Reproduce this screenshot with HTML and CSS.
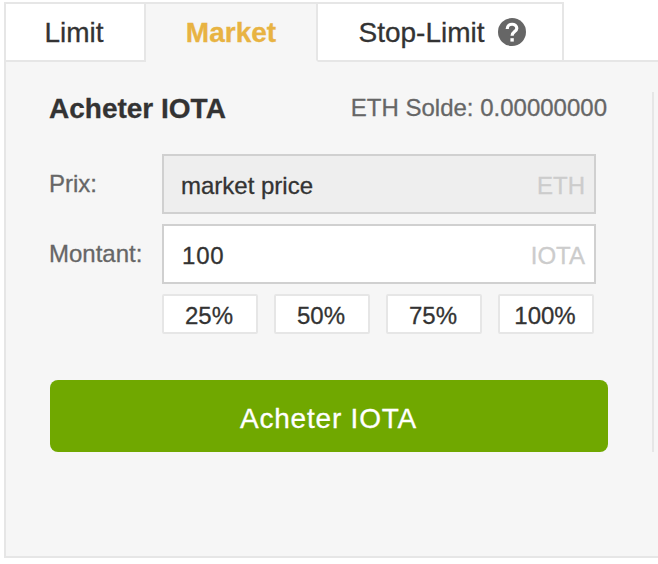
FILE: index.html
```
<!DOCTYPE html>
<html lang="fr">
<head>
<meta charset="utf-8">
<title>Acheter IOTA</title>
<link rel="stylesheet" href="styles.css">
</head>
<body>
<div class="widget">
  <nav class="tabs">
    <div class="tab tab-limit">Limit</div>
    <div class="tab tab-market active">Market</div>
    <div class="tab tab-stop"><span>Stop-Limit</span>
      <svg class="help" viewBox="0 0 28 28" width="28" height="28"><circle cx="14" cy="14" r="14" fill="#666"/><path d="M9.2 11C9.2 4.7 18.8 4.9 18.8 10.3C18.8 13.6 14.1 13.6 14.1 17.7" fill="none" stroke="#fff" stroke-width="3.2"/><path d="M12.4 20.2h3.4v3.4h-3.4z" fill="#fff"/></svg>
    </div>
    <div class="tab-rest"></div>
  </nav>
  <main class="panel">
    <section class="form">
      <header class="head"><h1>Acheter IOTA</h1><span class="balance">ETH Solde: 0.00000000</span></header>
      <div class="row"><label>Prix:</label><div class="field disabled"><span class="price">market price</span><span class="unit">ETH</span></div></div>
      <div class="row"><label>Montant:</label><div class="field"><span class="amount">100</span><span class="unit iota">IOTA</span></div></div>
      <div class="percents"><div>25%</div><div>50%</div><div>75%</div><div>100%</div></div>
      <div class="buy"><span>Acheter IOTA</span></div>
    </section>
    <div class="divider"></div>
  </main>
</div>
</body>
</html>
```

FILE: styles.css
```
* { box-sizing: border-box; }
body {
  margin: 0;
  height: 564px;
  overflow: hidden;
  background: #fff;
  color: #333;
  font: 24px "Liberation Sans", Arial, sans-serif;
  -webkit-text-stroke: .3px currentColor;
}
.widget { padding: 2px 0 0 4px; }
.tabs { display: flex; height: 60px; }
.tab {
  display: flex;
  justify-content: center;
  border-top: 2px solid #e6e6e6;
  border-right: 2px solid #e6e6e6;
  border-bottom: 2px solid #e6e6e6;
  font-size: 28px;
  line-height: 58px;
  white-space: nowrap;
}
.tab-limit { width: 142px; padding-right: 2px; border-left: 2px solid #e6e6e6; }
.tab-market { width: 172px; }
.tab-stop { width: 246px; padding-left: 4px; gap: 13px; }
.active {
  background: #f6f6f6;
  border-bottom-color: #f6f6f6;
  color: #e8b342;
  font-weight: bold;
}
.tab-rest { flex: 1; border-bottom: 2px solid #e6e6e6; }
.help { display: block; margin-top: 14px; }
.panel {
  display: flex;
  justify-content: space-between;
  height: 496px;
  padding: 30px 4px 0 44px;
  background: #f6f6f6;
  border-left: 2px solid #e6e6e6;
  border-bottom: 2px solid #e6e6e6;
}
.form { width: 558px; }
.head {
  display: flex;
  justify-content: space-between;
  height: 62px;
  padding-right: 1px;
  line-height: 32px;
  white-space: nowrap;
}
h1 { margin: 0; font-size: 28px; line-height: 33px; text-indent: -1px; }
.balance, label { color: #666; }
.row { display: flex; height: 60px; margin-bottom: 10px; }
label { width: 112px; line-height: 60px; text-indent: -1px; }
.field {
  display: flex;
  justify-content: space-between;
  width: 434px;
  padding: 2px 9px 0 17px;
  border: 2px solid #d0d0d0;
  background: #fff;
  line-height: 56px;
}
.disabled { background: #eee; }
.unit { color: #ccc; }
.amount { padding-left: 1px; letter-spacing: .8px; }
.percents { display: flex; gap: 16px; margin-left: 112px; }
.percents div {
  width: 96px;
  height: 40px;
  padding: 2px 2px 0 0;
  border: 2px solid #e6e6e6;
  border-radius: 2px;
  background: #fff;
  line-height: 36px;
  text-align: center;
}
.buy {
  height: 72px;
  margin-top: 46px;
  padding: 2px 1px 0 0;
  border-radius: 8px;
  background: #70a800;
  color: #fff;
  font-size: 28px;
  line-height: 73px;
  text-align: center;
  letter-spacing: .8px;
}
.divider { width: 2px; height: 360px; background: #e6e6e6; }
```
